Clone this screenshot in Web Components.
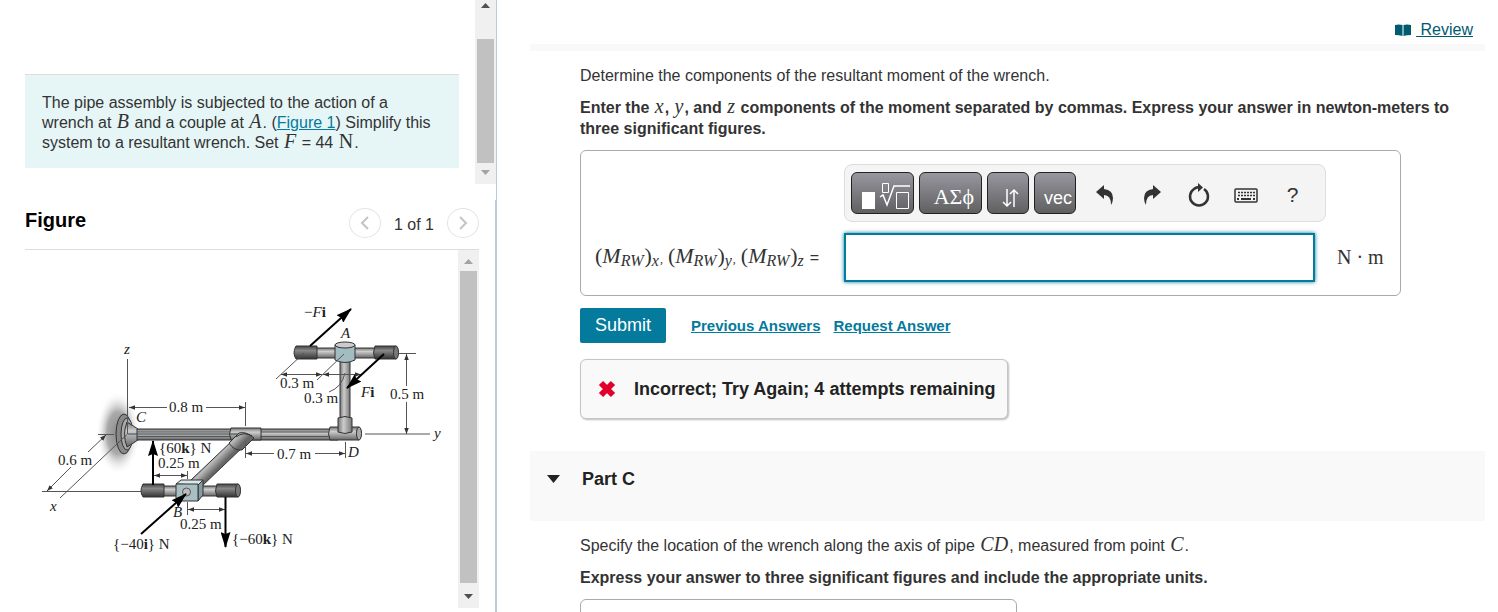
<!DOCTYPE html>
<html lang="en">
<head>
<meta charset="utf-8">
<title>Wrench problem</title>
<style>
  body {
    margin: 0;
    font: 16px/20px "Liberation Sans", Arial, sans-serif;
    color: #333;
    background: #fff;
  }
</style>
</head>
<body>
<problem-page>
  <problem-prompt slot="prompt">The pipe assembly is subjected to the action of a wrench at <math-var>B</math-var> and a couple at <math-var>A</math-var>. (<a href="#figure">Figure 1</a>) Simplify this system to a resultant wrench. Set <math-var>F</math-var> = 44 <math-var upright>N</math-var>.</problem-prompt>
  <figure-viewer slot="figure" id="figure" label="Figure" count="1 of 1">
    <pipe-figure></pipe-figure>
  </figure-viewer>
  <review-bar></review-bar>
  <part-body>
    <span slot="question">Determine the components of the resultant moment of the wrench.</span>
    <span slot="instructions">Enter the <math-var>x</math-var>, <math-var>y</math-var>, and <math-var>z</math-var> components of the moment separated by commas. Express your answer in newton-meters to three significant figures.</span>
    <answer-box></answer-box>
    <answer-actions></answer-actions>
    <feedback-box>Incorrect; Try Again; 4 attempts remaining</feedback-box>
  </part-body>
  <part-header>Part C</part-header>
  <part-body>
    <span slot="question">Specify the location of the wrench along the axis of pipe <math-var>CD</math-var>, measured from point <math-var>C</math-var>.</span>
    <span slot="instructions">Express your answer to three significant figures and include the appropriate units.</span>
    <empty-answer></empty-answer>
  </part-body>
</problem-page>

<script>
/**
 * Base class: opens a shadow root and fills it from render()
 */
class BaseElement extends HTMLElement {
  constructor() {
    super();
    this.attachShadow({ mode: 'open' });
  }

  connectedCallback() {
    this.shadowRoot.innerHTML = this.render().trim();
  }
}

// Italic (or upright) serif symbol inside running text
class MathVar extends BaseElement {
  render() {
    // No whitespace around the slot, it would show up in the sentence
    return `
      <style>
        :host {
          display: inline-block;
          height: 20px;
          margin: 0 1px;
          font: italic 20px/20px "Liberation Serif", serif;
          vertical-align: baseline;
          margin-block: -4px;
        }
        :host([upright]) { font-style: normal; }
      </style><slot></slot>`;
  }
}

class ProblemPage extends BaseElement {
  render() {
    return `
      <style>
        :host {
          display: grid;
          grid-template-columns: 497px minmax(0, 1fr);
          height: 100vh;
          overflow: hidden;
        }
        aside {
          display: flex;
          flex-direction: column;
          min-height: 0;
        }
        .top {
          display: flex;
          flex: 0 0 200px;
          border-right: 1px solid #b9cde0;
        }
        .prompt {
          flex: 1;
          padding: 74px 16px 0 25px;
        }
        scroll-bar { height: 184px; }
        .bottom {
          display: flex;
          flex: 1;
          min-height: 0;
          padding: 0 16px 4px 25px;
          border-right: 2px solid #b9cde0;
        }
        main {
          padding: 0 13px 0 33px;
          min-height: 0;
          overflow: hidden;
        }
      </style>
      <aside>
        <div class="top">
          <div class="prompt"><slot name="prompt"></slot></div>
          <scroll-bar start="39" end="21" down-off></scroll-bar>
        </div>
        <div class="bottom"><slot name="figure"></slot></div>
      </aside>
      <main><slot></slot></main>
    `;
  }
}

class ScrollBar extends BaseElement {
  render() {
    const start = this.getAttribute('start');
    const end = this.getAttribute('end');
    const up = this.hasAttribute('up-off') ? '#a3a3a3' : '#505050';
    const down = this.hasAttribute('down-off') ? '#a3a3a3' : '#505050';
    return `
      <style>
        :host {
          display: flex;
          flex-direction: column;
          flex: 0 0 21px;
          position: relative;
          background: #f0f0f0;
        }
        .thumb {
          flex: 1;
          margin: ${start}px 2px ${end}px;
          background: #c1c1c1;
        }
        svg {
          position: absolute;
          left: 6px;
        }
        .up { top: ${start > 30 ? 3 : 9}px; }
        .down { bottom: 9px; }
      </style>
      <svg class="up" width="9" height="5"><path d="M0 5L4.500 0L9 5z" fill="${up}"/></svg>
      <div class="thumb"></div>
      <svg class="down" width="9" height="5"><path d="M0 0H9L4.500 5z" fill="${down}"/></svg>
    `;
  }
}

class ProblemPrompt extends BaseElement {
  render() {
    return `
      <style>
        :host {
          display: block;
          padding: 18px 16px 15px 17px;
          background: #e6f6f7;
          border-top: 1px solid #ddd;
        }
        ::slotted(a) { color: #047a9c; }
      </style>
      <slot></slot>
    `;
  }
}

class FigureViewer extends BaseElement {
  render() {
    return `
      <style>
        :host {
          display: flex;
          flex-direction: column;
          flex: 1;
          min-height: 0;
        }
        header {
          display: flex;
          align-items: center;
          flex: 0 0 49px;
          border-bottom: 1px solid #ddd;
        }
        h2 {
          flex: 1;
          margin: 0 0 9px;
          font-size: 20px;
          color: #000;
        }
        nav {
          display: flex;
          align-items: center;
          gap: 13px;
          margin-bottom: 3px;
        }
        nav span { padding-top: 4px; }
        button {
          display: grid;
          place-items: center;
          width: 32px;
          height: 30px;
          padding: 0;
          border: 1px solid #e4e4e4;
          border-radius: 50%;
          background: #fff;
        }
        .view {
          display: flex;
          flex: 1;
          min-height: 0;
        }
        .image {
          flex: 1;
          padding: 45px 0 0 5px;
          overflow: hidden;
        }
      </style>
      <header>
        <h2>${this.getAttribute('label')}</h2>
        <nav>
          <button aria-label="Previous figure"><svg width="9" height="14" fill="none" stroke="#c4c4c8" stroke-width="2"><path d="M8 1L2 7L8 13"/></svg></button>
          <span>${this.getAttribute('count')}</span>
          <button aria-label="Next figure"><svg width="9" height="14" fill="none" stroke="#c4c4c8" stroke-width="2"><path d="M1 1L7 7L1 13"/></svg></button>
        </nav>
      </header>
      <div class="view">
        <div class="image"><slot></slot></div>
        <scroll-bar start="21" end="25" up-off></scroll-bar>
      </div>
    `;
  }
}

// Pipe assembly drawing
class PipeFigure extends BaseElement {
  render() {
    return `
      <style>
        :host { display: block; }
        svg { display: block; }
        text {
          font: 15px "Liberation Serif", serif;
          fill: #222;
        }
        .i { font-style: italic; }
        .b { font-weight: bold; }
        .dim { stroke: #555; fill: none; }
        .force { stroke: #000; stroke-width: 2; }
        .edge { stroke: #333; stroke-width: 1; }
      </style>
      <svg width="428" height="265" viewBox="30 295 428 265" role="img" aria-label="Pipe assembly">
        <defs>
          <linearGradient id="h" x2="0" y2="1">
            <stop offset="0" stop-color="#777"/><stop offset=".35" stop-color="#ccc"/><stop offset="1" stop-color="#666"/>
          </linearGradient>
          <linearGradient id="d" x2="0" y2="1">
            <stop offset="0" stop-color="#444"/><stop offset=".35" stop-color="#888"/><stop offset="1" stop-color="#333"/>
          </linearGradient>
          <linearGradient id="v">
            <stop offset="0" stop-color="#777"/><stop offset=".4" stop-color="#ccc"/><stop offset="1" stop-color="#777"/>
          </linearGradient>
          <linearGradient id="g" gradientUnits="userSpaceOnUse" x1="211" y1="455" x2="221" y2="465">
            <stop offset="0" stop-color="#777"/><stop offset=".4" stop-color="#bbb"/><stop offset="1" stop-color="#666"/>
          </linearGradient>
          <radialGradient id="wall">
            <stop offset="0" stop-color="#888"/><stop offset=".5" stop-color="#aaa"/><stop offset="1" stop-color="#fff" stop-opacity="0"/>
          </radialGradient>
          <marker id="a" viewBox="0 0 8 6" refX="8" refY="3" markerWidth="6" markerHeight="5" orient="auto-start-reverse" markerUnits="userSpaceOnUse">
            <path d="M0 0L8 3L0 6z" fill="#333"/>
          </marker>
          <marker id="f" viewBox="0 0 16 10" refX="15" refY="5" markerWidth="16" markerHeight="10" orient="auto" markerUnits="userSpaceOnUse">
            <path d="M0 0L16 5L0 10L2 5z"/>
          </marker>
        </defs>

        <!-- wall support at C -->
        <ellipse cx="118" cy="433" rx="22" ry="42" fill="url(#wall)"/>
        <ellipse cx="124" cy="434" rx="8" ry="20" fill="#888" class="edge"/>
        <ellipse cx="127" cy="434" rx="6" ry="16" fill="#aaa" class="edge"/>
        <path d="M127 422L138 429V440L127 447Q122 434 127 422z" fill="url(#h)" class="edge"/>

        <!-- main pipe C to D -->
        <path d="M137 429H338V440H137z" fill="url(#h)" class="edge"/>
        <path d="M137 432H338M137 436.500H338" stroke="#555"/>
        <path d="M231 428H261V440H231q-3 -6 0 -12z" fill="url(#h)" class="edge"/>
        <path d="M330 427H359q4 6 0 13H330q-3 -6 0 -13z" fill="url(#h)" class="edge"/>
        <ellipse cx="359" cy="433.500" rx="2.500" ry="6.500" fill="#aaa" class="edge"/>
        <path d="M128 434H246" stroke="#3a4b50"/>

        <!-- branch to B -->
        <path d="M233 440L191 480L201 487L245 445z" fill="url(#g)" class="edge"/>
        <path d="M239 433L229 443Q234 451 242 450L254 438Q246 431 239 433z" fill="url(#g)" class="edge"/>
        <path d="M236 437q8 -6 16 -1" fill="none" stroke="#333"/>

        <!-- handle at B -->
        <path d="M162 486H218V496H162z" fill="url(#h)" class="edge"/>
        <path d="M143 484H164V497H143q-4 -6 0 -13z" fill="url(#d)" class="edge"/>
        <path d="M217 484H238q4 6 0 13H217q-3 -6 0 -13z" fill="url(#d)" class="edge"/>
        <ellipse cx="238" cy="490.500" rx="2.500" ry="6.500" fill="#777" class="edge"/>
        <path d="M176 484L181 480H203L198 485z" fill="#dbe8ea" class="edge"/>
        <path d="M198 485L203 480V495L198 501z" fill="#829ca1" class="edge"/>
        <path d="M176 484H198V501H179L176 498z" fill="#a9bfc4" class="edge"/>
        <circle cx="186.500" cy="492" r="4" fill="#bbb" stroke="#555"/>

        <!-- riser and handle at A -->
        <path d="M340 358H350V420H340z" fill="url(#v)" class="edge"/>
        <path d="M338 418Q345 415 352 418V432Q345 435 338 432z" fill="url(#v)" class="edge"/>
        <path d="M315 348H376V358H315z" fill="url(#h)" class="edge"/>
        <path d="M296 346H317V359H296q-4 -6 0 -13z" fill="url(#d)" class="edge"/>
        <path d="M375 346H396q4 6 0 13H375q-3 -6 0 -13z" fill="url(#d)" class="edge"/>
        <ellipse cx="396" cy="352.500" rx="2.500" ry="6.500" fill="#777" class="edge"/>
        <path d="M335 345V360Q345 365 355 360V345z" fill="#a3bcc2" class="edge"/>
        <ellipse cx="345" cy="345" rx="10" ry="3" fill="#ccc" class="edge"/>

        <!-- axes -->
        <path class="dim" d="M127.500 359V434L60 498M365 434H430"/>
        <!-- dimension lines -->
        <g class="dim">
          <path d="M98 434.500H114M42 491.500H141M245.500 402V426M245.500 442V458M345.500 442V458M187.500 471V479M187.500 502V515M399 353.500H416M304 353L276 379M344 354L317 380M329 392Q342 387 345 373"/>
          <path marker-end="url(#a)" d="M88 452L106 435"/>
          <path marker-end="url(#a)" d="M71 467L47 491"/>
          <path marker-end="url(#a)" d="M167 407.500H129"/>
          <path marker-end="url(#a)" d="M206 407.500H245"/>
          <path marker-end="url(#a)" d="M274 453.500H246"/>
          <path marker-end="url(#a)" d="M315 453.500H345"/>
          <path marker-start="url(#a)" marker-end="url(#a)" d="M154 475.500H187"/>
          <path marker-start="url(#a)" marker-end="url(#a)" d="M188 509.500H225"/>
          <path marker-start="url(#a)" marker-end="url(#a)" d="M281 374.500H322"/>
          <path marker-start="url(#a)" marker-end="url(#a)" d="M323 374.500H361"/>
          <path marker-end="url(#a)" d="M406.500 386V354"/>
          <path marker-end="url(#a)" d="M406.500 402V434"/>
        </g>

        <!-- forces -->
        <g class="force">
          <path marker-end="url(#f)" d="M310 346L351 309"/>
          <path marker-end="url(#f)" d="M384 354L347 388"/>
          <path marker-end="url(#f)" d="M153 485V441"/>
          <path marker-end="url(#f)" d="M225.500 497V547"/>
          <path marker-end="url(#f)" d="M141 534L186 494"/>
        </g>

        <text x="124" y="354" class="i">z</text>
        <text x="50" y="511" class="i">x</text>
        <text x="434" y="438" class="i">y</text>
        <text x="136" y="422" class="i">C</text>
        <text x="341" y="338" class="i">A</text>
        <text x="348" y="457" class="i">D</text>
        <text x="173" y="517" class="i">B</text>
        <text x="169" y="412">0.8 m</text>
        <text x="277" y="459">0.7 m</text>
        <text x="58" y="465">0.6 m</text>
        <text x="390" y="399">0.5 m</text>
        <text x="280" y="388">0.3 m</text>
        <text x="304" y="403">0.3 m</text>
        <text x="158" y="468">0.25 m</text>
        <text x="180" y="529">0.25 m</text>
        <text x="304" y="317">−<tspan class="i">F</tspan><tspan class="b">i</tspan></text>
        <text x="361" y="397"><tspan class="i">F</tspan><tspan class="b">i</tspan></text>
        <text x="159" y="453">{60<tspan class="b">k</tspan>} N</text>
        <text x="232" y="544">{−60<tspan class="b">k</tspan>} N</text>
        <text x="113" y="549">{−40<tspan class="b">i</tspan>} N</text>
      </svg>
    `;
  }
}

class ReviewBar extends BaseElement {
  render() {
    return `
      <style>
        :host {
          display: flex;
          justify-content: flex-end;
          align-items: center;
          gap: 5px;
          height: 29px;
          padding: 15px 12px 0;
          border-bottom: 7px solid #f9f9f9;
        }
        a { color: #005a70; white-space: pre; }
      </style>
      <svg width="16" height="12" fill="#005a70"><path d="M0 1Q4 0 7.500 1V12Q4 11 0 11zM8.500 1Q12 0 16 1V11Q12 11 8.500 12z"/></svg>
      <a href="#review"> Review</a>
    `;
  }
}

// Question text, instructions, and whatever answers go under them
class PartBody extends BaseElement {
  render() {
    return `
      <style>
        :host {
          display: block;
          padding: 14px 84px 32px 50px;
        }
        p { margin: 0 0 11px; line-height: 21px; }
        .instructions { font-weight: bold; margin-right: -70px; }
      </style>
      <p><slot name="question"></slot></p>
      <p class="instructions"><slot name="instructions"></slot></p>
      <slot></slot>
    `;
  }
}

class AnswerBox extends BaseElement {
  render() {
    return `
      <style>
        :host {
          display: grid;
          grid-template-columns: 249px 471px 1fr;
          row-gap: 11px;
          align-items: center;
          padding: 13px 14px;
          border: 1px solid #aaa;
          border-radius: 6px;
        }
        math-toolbar { grid-column: 2 / -1; justify-self: start; }
        label {
          display: flex;
          align-items: baseline;
          gap: 5px;
          height: 28px;
          white-space: nowrap;
        }
        .m {
          display: flex;
          align-items: baseline;
          font: italic 22px/24px "Liberation Serif", serif;
        }
        .p { font-style: normal; }
        sub {
          position: relative;
          top: 3px;
          margin-right: 1px;
          font-size: 16px;
          line-height: 20px;
          vertical-align: baseline;
        }
        .comma { font-size: 12px; font-style: normal; }
        input {
          box-sizing: border-box;
          width: 100%;
          height: 49px;
          padding: 0 10px;
          border: 2px solid #047a9c;
          box-shadow: 0 0 4px #047a9c;
          outline: none;
          font: 18px "Liberation Sans", sans-serif;
        }
        .unit {
          padding: 0 0 2px 22px;
          font: 20px/24px "Liberation Serif", serif;
        }
      </style>
      <math-toolbar></math-toolbar>
      <label for="answer">${this.term('x', ',')}${this.term('y', ',')}${this.term('z', '')}<span>=</span></label>
      <input id="answer" type="text" autocomplete="off">
      <span class="unit">N · m</span>
    `;
  }

  term(axis, comma) {
    return `<span class="m"><span class="p">(</span><span>M</span><sub>RW</sub><span class="p">)</span><sub>${axis}</sub><span class="comma">${comma}</span></span>`;
  }
}

class MathToolbar extends BaseElement {
  render() {
    return `
      <style>
        :host {
          display: flex;
          align-items: center;
          box-sizing: border-box;
          width: 482px;
          height: 58px;
          padding: 0 6px;
          background: #f4f4f4;
          border: 1px solid #ddd;
          border-radius: 8px;
        }
        button { padding: 0; font: inherit; color: #333; }
        .keys, .tools { display: flex; }
        .keys { gap: 5px; }
        .keys button {
          display: flex;
          justify-content: flex-end;
          align-items: flex-end;
          width: 42px;
          height: 42px;
          padding: 0 3px 5px;
          border: 1px solid #222;
          border-radius: 6px;
          background: linear-gradient(#9896a0, #606060);
          color: #fff;
          font-size: 18px;
          overflow: hidden;
        }
        .keys .wide { width: 63px; padding-bottom: 3px; }
        .keys .greek {
          padding-right: 7px;
          font: 22px/26px "Liberation Serif", serif;
        }
        .tools { margin-left: 5px; }
        .tools button {
          display: grid;
          place-items: center;
          width: 47px;
          height: 42px;
          padding-top: 4px;
          border: 0;
          background: none;
          font-size: 21px;
        }
      </style>
      <div class="keys">
        <button class="wide" aria-label="Templates">
          <svg width="48" height="28" fill="none" stroke="#fff">
            <path d="M0 10H13V27H0z" fill="#fff" stroke="none"/>
            <path d="M20.500 1.500H26.500V10.500H20.500zM34.500 10.500H46.500V26.500H34.500z"/>
            <path d="M18 15L21 13L25 23L32 4H48" stroke-width="1.500"/>
          </svg>
        </button>
        <button class="wide greek" aria-label="Symbols">ΑΣϕ</button>
        <button aria-label="Arrows">
          <svg width="23" height="20" fill="none" stroke="#fff" stroke-width="1.500"><path d="M5 1V18M1 14L5 18L9 14M12 19V2M8 6L12 2L16 6"/></svg>
        </button>
        <button aria-label="Vector">vec</button>
      </div>
      <div class="tools">
        <button aria-label="Undo"><svg width="18" height="20" fill="#333"><path d="M0 7L8 0V4Q17 5 17 13Q17 17 15 20Q15 10 8 10V14z"/></svg></button>
        <button aria-label="Redo"><svg width="18" height="20" fill="#333"><path d="M18 7L10 0V4Q1 5 1 13Q1 17 3 20Q3 10 10 10V14z"/></svg></button>
        <button aria-label="Reset"><svg width="22" height="24"><path d="M16 6A9 9 0 1 1 6 6Q8 4 12 4" fill="none" stroke="#333" stroke-width="2.500"/><path d="M10 0L15 4.500L10 9z" fill="#333"/></svg></button>
        <button aria-label="Keyboard"><svg width="24" height="15"><rect x="1" y="1" width="22" height="13" rx="1" fill="none" stroke="#333" stroke-width="1.500"/><path d="M4 4.500H21M4 7.500H21" stroke="#333" stroke-width="1.500" stroke-dasharray="2 1"/><path d="M3 11H5M7 11H17M19 11H21" stroke="#333" stroke-width="2"/></svg></button>
        <button aria-label="Help">?</button>
      </div>
    `;
  }
}

class AnswerActions extends BaseElement {
  render() {
    return `
      <style>
        :host {
          display: flex;
          align-items: center;
          gap: 13px;
          margin: 12px 0 16px;
        }
        button {
          height: 35px;
          width: 86px;
          margin-right: 12px;
          padding: 0;
          border: 0;
          border-radius: 2px;
          background: #047a9c;
          color: #fff;
          font: 18px "Liberation Sans", sans-serif;
        }
        a { color: #047a9c; font-size: 15px; font-weight: bold; }
      </style>
      <button type="submit">Submit</button>
      <a href="#previous">Previous Answers</a>
      <a href="#request">Request Answer</a>
    `;
  }
}

class FeedbackBox extends BaseElement {
  render() {
    return `
      <style>
        :host {
          display: flex;
          align-items: center;
          gap: 18px;
          box-sizing: border-box;
          width: fit-content;
          height: 60px;
          padding: 0 12px 0 17px;
          background: #f9f9f9;
          border: 1px solid #c5c5c5;
          border-radius: 6px;
          box-shadow: 1px 1px 2px #bbb;
          font-size: 18px;
          font-weight: bold;
          color: #222;
        }
      </style>
      <svg width="18" height="18" stroke="#e0002b" stroke-width="6"><path d="M3 3L15 15M15 3L3 15"/></svg>
      <span><slot></slot></span>
    `;
  }
}

class PartHeader extends BaseElement {
  render() {
    return `
      <style>
        :host { display: block; background: #f9f9f9; }
        h2 {
          display: flex;
          align-items: center;
          gap: 22px;
          height: 56px;
          margin: 0;
          padding: 0 17px 14px;
          font-size: 18px;
          color: #222;
        }
      </style>
      <h2><svg width="13" height="8" fill="#222"><path d="M0 0H13L6.500 8z"/></svg><slot></slot></h2>
    `;
  }
}

class EmptyAnswer extends BaseElement {
  render() {
    return `
      <style>
        :host {
          display: block;
          box-sizing: border-box;
          max-width: 437px;
          height: 146px;
          border: 1px solid #aaa;
          border-radius: 6px;
        }
      </style>
    `;
  }
}

customElements.define('math-var', MathVar);
customElements.define('scroll-bar', ScrollBar);
customElements.define('problem-page', ProblemPage);
customElements.define('problem-prompt', ProblemPrompt);
customElements.define('figure-viewer', FigureViewer);
customElements.define('pipe-figure', PipeFigure);
customElements.define('review-bar', ReviewBar);
customElements.define('part-body', PartBody);
customElements.define('math-toolbar', MathToolbar);
customElements.define('answer-box', AnswerBox);
customElements.define('answer-actions', AnswerActions);
customElements.define('feedback-box', FeedbackBox);
customElements.define('part-header', PartHeader);
customElements.define('empty-answer', EmptyAnswer);
</script>
</body>
</html>
